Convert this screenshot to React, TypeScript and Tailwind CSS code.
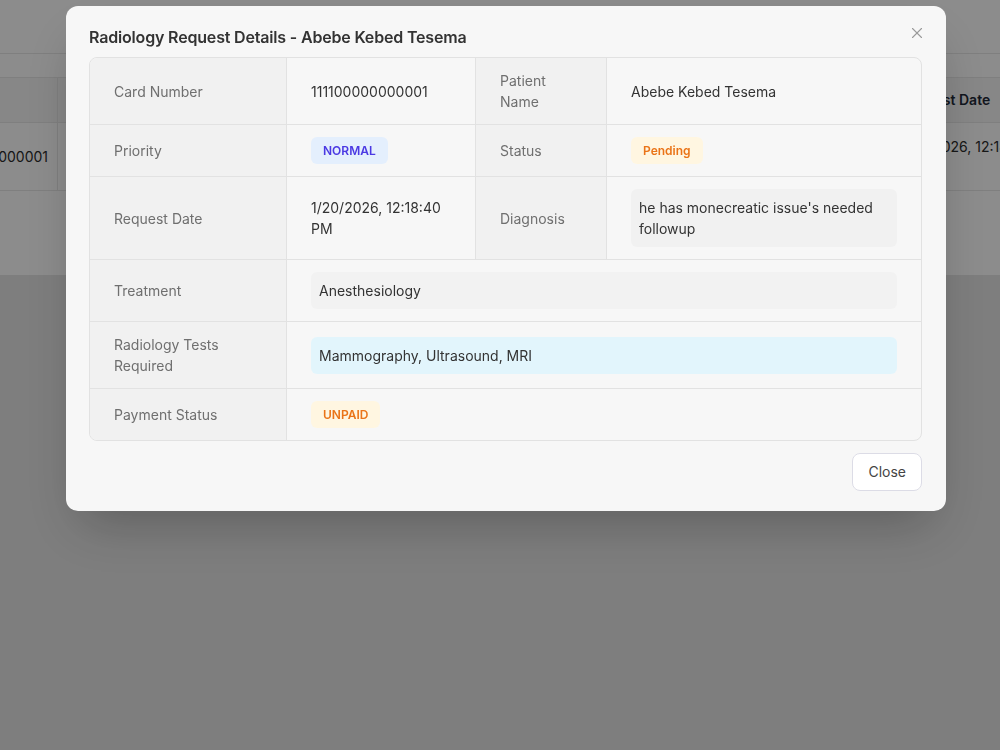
import React from "react";
import { X } from "lucide-react";

const font = { fontFamily: "Inter, 'Noto Sans', sans-serif" };

function Badge({ text, tone }: { text: string; tone: "blue" | "amber" }) {
  const cls =
    tone === "blue"
      ? "bg-[#e4effd] text-[#4b39e3]"
      : "bg-[#fff6e1] text-[#ea7418]";
  return (
    <span className={`inline-block rounded-md px-3 py-[4px] text-xs leading-[19px] font-semibold ${cls}`}>
      {text}
    </span>
  );
}

function Label({ children }: { children: React.ReactNode }) {
  return (
    <div className="flex items-center bg-[#f1f1f1] px-6 py-3 text-sm leading-[21px] text-[#6f6f6f]">
      {children}
    </div>
  );
}

function Value({ children, span, label }: { children: React.ReactNode; span?: boolean; label?: boolean }) {
  return (
    <div
      className={`flex items-center border-l border-[#e2e2e2] px-6 py-3 text-sm leading-[21px] ${
        span ? "col-span-3" : ""
      } ${label ? "bg-[#f1f1f1] text-[#6f6f6f]" : "text-[#333]"}`}
    >
      {children}
    </div>
  );
}

function BackgroundPage() {
  // page behind the modal (dimmed by overlay)
  return (
    <div className="min-h-[750px] bg-[#e6e6e6]">
      <div className="h-[275px] bg-white">
        <div className="h-[54px] border-b border-[#e8e8e8]" />
        <div className="mt-[23px] border-t border-[#e8e8e8]">
          <div className="flex h-[45px] border-b border-[#e8e8e8] bg-[#f6f6f6] text-sm font-semibold text-[#1f2937]">
            <div className="w-[58px] border-r border-[#e8e8e8]" />
            <div className="flex-1" />
            <div className="flex w-[100px] items-center overflow-hidden">
              <span className="whitespace-nowrap">Request Date</span>
            </div>
          </div>
          <div className="flex h-[68px] border-b border-[#e8e8e8] text-sm text-[#2b2b2b]">
            <div className="flex w-[58px] items-center justify-end overflow-hidden border-r border-[#e8e8e8] pr-[9px]">
              <span className="whitespace-nowrap">111100000000001</span>
            </div>
            <div className="flex-1" />
            <div className="flex w-[100px] overflow-hidden pt-[13px] leading-[21px]">
              <span className="whitespace-nowrap">1/20/2026, 12:18:40</span>
            </div>
          </div>
        </div>
      </div>
    </div>
  );
}

export default function App() {
  return (
    <div className="relative h-[750px] w-[1000px] overflow-hidden" style={font}>
      <BackgroundPage />
      <div className="fixed inset-0 bg-black/45" />
      <div className="fixed inset-0 flex justify-center pl-[12px] pt-[6px]">
        <div className="relative h-fit w-[880px] rounded-xl bg-[#f7f7f7] pb-5 pl-[23px] pr-6 pt-[19px] shadow-2xl">
          <h2 className="text-base leading-6 font-semibold tracking-[-0.011em] text-[#333]">
            Radiology Request Details - Abebe Kebed Tesema
          </h2>
          <button className="absolute right-[20px] top-[18px] text-[#9a9a9a]">
            <X size={18} strokeWidth={1.5} />
          </button>

          <div className="mt-[8px] overflow-hidden rounded-lg border border-[#e2e2e2]">
            <div className="grid grid-cols-[196px_189px_131px_1fr] border-b border-[#e2e2e2]">
              <Label>Card Number</Label>
              <Value>111100000000001</Value>
              <Value label>Patient Name</Value>
              <Value>Abebe Kebed Tesema</Value>
            </div>
            <div className="grid grid-cols-[196px_189px_131px_1fr] border-b border-[#e2e2e2]">
              <Label>Priority</Label>
              <Value>
                <Badge text="NORMAL" tone="blue" />
              </Value>
              <Value label>Status</Value>
              <Value>
                <Badge text="Pending" tone="amber" />
              </Value>
            </div>
            <div className="grid grid-cols-[196px_189px_131px_1fr] border-b border-[#e2e2e2]">
              <Label>Request Date</Label>
              <Value>1/20/2026, 12:18:40 PM</Value>
              <Value label>Diagnosis</Value>
              <Value>
                <div className="w-full rounded-md bg-[#f1f1f1] px-2 py-2">he has monecreatic issue's needed followup</div>
              </Value>
            </div>
            <div className="grid grid-cols-[196px_189px_131px_1fr] border-b border-[#e2e2e2]">
              <Label>Treatment</Label>
              <Value span>
                <div className="w-full rounded-md bg-[#f2f2f2] px-2 py-2">Anesthesiology</div>
              </Value>
            </div>
            <div className="grid grid-cols-[196px_189px_131px_1fr] border-b border-[#e2e2e2]">
              <Label>Radiology Tests Required</Label>
              <Value span>
                <div className="w-full rounded-md bg-[#e2f5fc] px-2 py-2">Mammography, Ultrasound, MRI</div>
              </Value>
            </div>
            <div className="grid grid-cols-[196px_189px_131px_1fr]">
              <Label>Payment Status</Label>
              <Value span>
                <Badge text="UNPAID" tone="amber" />
              </Value>
            </div>
          </div>

          <div className="mt-[12px] flex justify-end">
            <button className="h-[38px] rounded-lg border border-[#dcdce6] bg-white px-[15px] text-sm font-normal text-[#444]">
              Close
            </button>
          </div>
        </div>
      </div>
    </div>
  );
}
